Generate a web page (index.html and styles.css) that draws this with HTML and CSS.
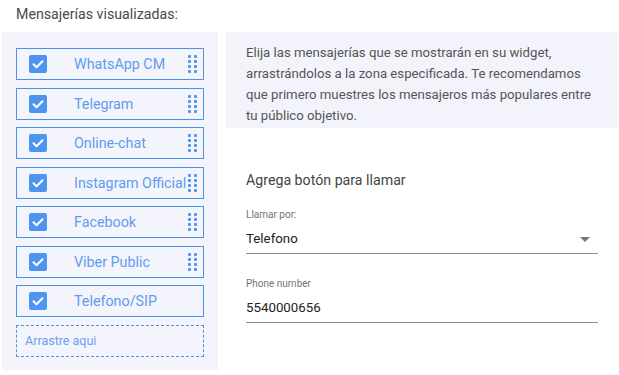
FILE: index.html
```html
<!DOCTYPE html>
<html lang="es">
<head>
    <meta charset="UTF-8">
    <meta name="viewport" content="width=device-width, initial-scale=1.0">
    <title>Mensajerías</title>
    <link rel="stylesheet" href="styles.css">
</head>
<body>
    <div class="page">
        <div class="title">Mensajerías visualizadas:</div>
        <div class="columns">
            <div class="messengers">
                <div class="item">
                    <span class="check"><svg viewBox="0 0 18 18"><path d="M4.5 9.2l3 3 6-6" /></svg></span>
                    <span class="name">WhatsApp CM</span>
                    <span class="grip"><i></i><i></i><i></i><i></i><i></i><i></i><i></i><i></i></span>
                </div>
                <div class="item">
                    <span class="check"><svg viewBox="0 0 18 18"><path d="M4.5 9.2l3 3 6-6" /></svg></span>
                    <span class="name">Telegram</span>
                    <span class="grip"><i></i><i></i><i></i><i></i><i></i><i></i><i></i><i></i></span>
                </div>
                <div class="item">
                    <span class="check"><svg viewBox="0 0 18 18"><path d="M4.5 9.2l3 3 6-6" /></svg></span>
                    <span class="name">Online-chat</span>
                    <span class="grip"><i></i><i></i><i></i><i></i><i></i><i></i><i></i><i></i></span>
                </div>
                <div class="item">
                    <span class="check"><svg viewBox="0 0 18 18"><path d="M4.5 9.2l3 3 6-6" /></svg></span>
                    <span class="name">Instagram Official</span>
                    <span class="grip"><i></i><i></i><i></i><i></i><i></i><i></i><i></i><i></i></span>
                </div>
                <div class="item">
                    <span class="check"><svg viewBox="0 0 18 18"><path d="M4.5 9.2l3 3 6-6" /></svg></span>
                    <span class="name">Facebook</span>
                    <span class="grip"><i></i><i></i><i></i><i></i><i></i><i></i><i></i><i></i></span>
                </div>
                <div class="item">
                    <span class="check"><svg viewBox="0 0 18 18"><path d="M4.5 9.2l3 3 6-6" /></svg></span>
                    <span class="name">Viber Public</span>
                    <span class="grip"><i></i><i></i><i></i><i></i><i></i><i></i><i></i><i></i></span>
                </div>
                <div class="item">
                    <span class="check"><svg viewBox="0 0 18 18"><path d="M4.5 9.2l3 3 6-6" /></svg></span>
                    <span class="name">Telefono/SIP</span>
                </div>
                <div class="dropzone">Arrastre aqui</div>
            </div>

            <div class="settings">
                <div class="hint">
                    Elija las mensajerías que se mostrarán en su widget, arrastrándolos a la zona especificada. Te recomendamos que primero muestres los mensajeros más populares entre tu público objetivo.
                </div>
                <div class="call-form">
                    <div class="form-title">Agrega botón para llamar</div>
                    <div class="field">
                        <div class="field-label">Llamar por:</div>
                        <div class="field-value">
                            <span>Telefono</span>
                            <span class="arrow"></span>
                        </div>
                    </div>
                    <div class="field">
                        <div class="field-label">Phone number</div>
                        <div class="field-value">
                            <span>5540000656</span>
                        </div>
                    </div>
                </div>
            </div>
        </div>
    </div>
</body>
</html>
```
FILE: styles.css
```css
body {
    margin: 0;
    background-color: #ffffff;
    font-family: Roboto, "Liberation Sans", sans-serif;
}
.page {
    width: 619px;
    height: 375px;
    overflow: hidden;
}
.title {
    height: 32px;
    padding-left: 16px;
    font-size: 14.2px;
    line-height: 28px;
    color: #4a4a4a;
    box-sizing: border-box;
}
.columns {
    display: flex;
}

/* left list */
.messengers {
    margin-left: 2px;
    width: 216px;
    height: 338px;
    background-color: #f4f4fc;
    padding: 16px 0 0 14px;
    box-sizing: border-box;
    display: flex;
    flex-direction: column;
    gap: 7.5px;
}
.item {
    width: 188px;
    height: 32px;
    border: 1px solid #4a92ea;
    box-sizing: border-box;
    display: flex;
    align-items: center;
    position: relative;
}
.check {
    width: 18px;
    height: 18px;
    margin-left: 12px;
    background-color: #4d95f1;
    border-radius: 2px;
    display: flex;
}
.check svg {
    width: 18px;
    height: 18px;
    fill: none;
    stroke: #ffffff;
    stroke-width: 2;
    stroke-linecap: round;
    stroke-linejoin: round;
}
.name {
    margin-left: 27px;
    font-size: 14.3px;
    color: #5f9cee;
    white-space: nowrap;
}
.grip {
    position: absolute;
    left: 171px;
    top: 6px;
    width: 9px;
    display: flex;
    flex-wrap: wrap;
    gap: 2px 3px;
}
.grip i {
    width: 3px;
    height: 3px;
    border-radius: 1px;
    background-color: #4d95f1;
}
.dropzone {
    width: 188px;
    height: 32px;
    margin-top: 0.5px;
    border: 1px dashed #4a92ea;
    box-sizing: border-box;
    padding-left: 8px;
    font-size: 12.5px;
    line-height: 30px;
    color: #6b9ff0;
}

/* right side */
.settings {
    margin-left: 8px;
    width: 391px;
}
.hint {
    background-color: #f3f3fb;
    padding: 10px 20px 3px 20px;
    height: 96px;
    box-sizing: border-box;
    font-size: 13.2px;
    line-height: 21px;
    color: #555555;
}
.call-form {
    padding: 42px 19px 0 20px;
}
.form-title {
    font-size: 14.2px;
    line-height: 20px;
    color: #444444;
    margin-bottom: 19px;
}
.field {
    margin-bottom: 24px;
}
.field-label {
    font-size: 10px;
    line-height: 12px;
    color: #757575;
    margin-bottom: 9px;
}
.field-value {
    height: 23px;
    border-bottom: 1px solid #8c8c8c;
    font-size: 13.3px;
    line-height: 18px;
    color: #222222;
    display: flex;
    justify-content: space-between;
}
.arrow {
    margin: 7px 8px 0 0;
    width: 0;
    height: 0;
    border-left: 5px solid transparent;
    border-right: 5px solid transparent;
    border-top: 5px solid #757575;
}
```
